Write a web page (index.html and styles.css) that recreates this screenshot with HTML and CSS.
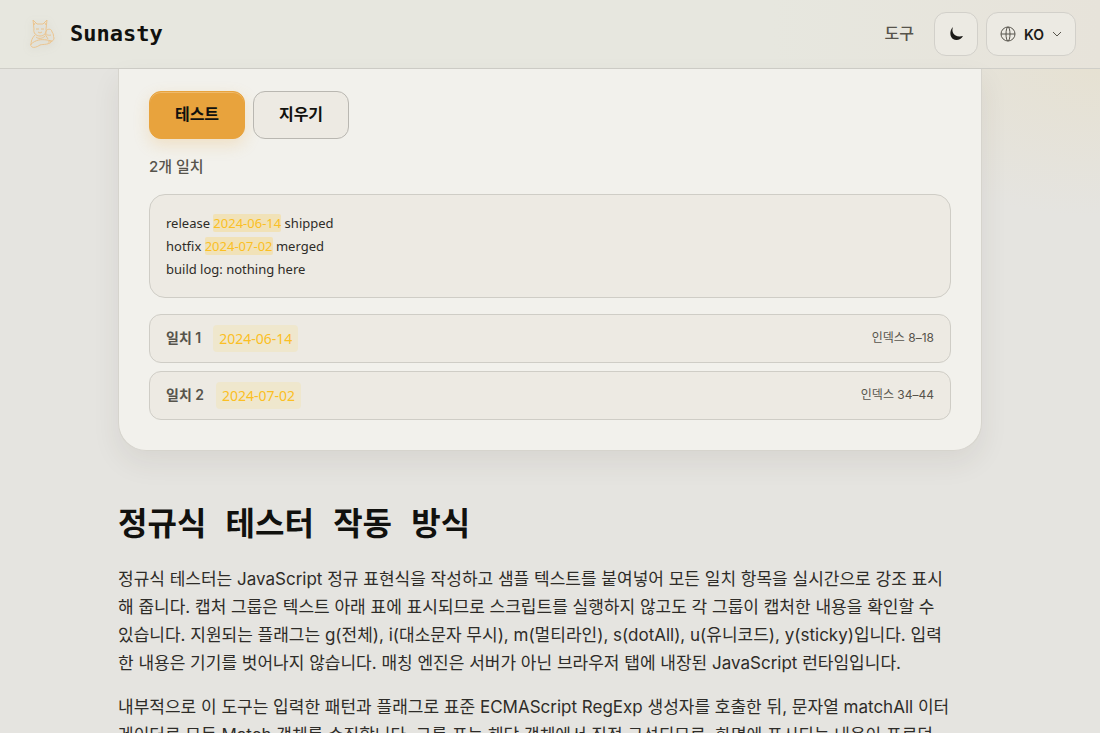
FILE: index.html
```html
<!DOCTYPE html>
<html lang="ko">
<head>
    <meta charset="UTF-8">
    <meta name="viewport" content="width=device-width, initial-scale=1.0">
    <title>정규식 테스터 - Sunasty</title>
    <link rel="stylesheet" href="styles.css">
</head>
<body>
    <header class="header">
        <a class="brand" href="#">
            <svg class="brand-logo" viewBox="0 0 36 36" aria-hidden="true">
                <path d="M9 4l1 9c-1 4 2 7 6 7s7-3 6-7l1-9-4 4h-6z"/>
                <path d="M12 13h3M17 13h3M14 16l2 1 2-1M10 9l1-2M22 9l-1-2"/>
                <path d="M11 19c-3 3-4 6-4 10M21 18l3 5M12 21c2 2 6 2 9-1"/>
                <path d="M22 15c2-3 6-2 6 1 2 2 1 4 2 6 0 3-3 4-6 4M22 15c-1 3 1 5 5 4"/>
                <path d="M7 28c5-4 9-5 16-4l5 1c-2 4-9 3-12 4-3 2-6 3-8 2-1-1-2-2-1-3z"/>
            </svg>
            <span class="brand-name">Sunasty</span>
        </a>
        <nav class="nav">
            <a class="nav-link" href="#">도구</a>
            <button class="icon-btn" type="button" aria-label="테마">
                <svg class="moon" viewBox="0 0 16 16" aria-hidden="true">
                    <path d="M5 1C3 6 6 12 15 10C13 14 8 15 5 13C2 11 1 5 5 1z"/>
                </svg>
            </button>
            <button class="lang-btn" type="button">
                <svg class="globe" viewBox="0 0 16 16" aria-hidden="true">
                    <circle cx="8" cy="8" r="7"/>
                    <ellipse cx="8" cy="8" rx="2" ry="7"/>
                    <path d="M1 8h14"/>
                </svg>
                <span>KO</span>
                <svg class="chevron" viewBox="0 0 10 10" aria-hidden="true"><path d="M1 3l4 4 4-4"/></svg>
            </button>
        </nav>
    </header>

    <main class="container">
        <section class="card">
            <div class="actions">
                <button class="btn btn-primary" type="button">테스트</button>
                <button class="btn btn-secondary" type="button">지우기</button>
            </div>
            <p class="status">2개 일치</p>
            <div class="preview">
                <p>release <mark>2024-06-14</mark> shipped</p>
                <p>hotfix <mark>2024-07-02</mark> merged</p>
                <p>build log: nothing here</p>
            </div>
            <ul class="matches">
                <li class="match">
                    <strong class="match-label">일치 1</strong>
                    <code class="match-value">2024-06-14</code>
                    <span class="match-index">인덱스 8–18</span>
                </li>
                <li class="match">
                    <strong class="match-label">일치 2</strong>
                    <code class="match-value">2024-07-02</code>
                    <span class="match-index">인덱스 34–44</span>
                </li>
            </ul>
        </section>

        <article class="article">
            <h2>정규식 테스터 작동 방식</h2>
            <p>정규식 테스터는 JavaScript 정규 표현식을 작성하고 샘플 텍스트를 붙여넣어 모든 일치 항목을 실시간으로 강조 표시<br>해 줍니다. 캡처 그룹은 텍스트 아래 표에 표시되므로 스크립트를 실행하지 않고도 각 그룹이 캡처한 내용을 확인할 수<br>있습니다. 지원되는 플래그는 g(전체), i(대소문자 무시), m(멀티라인), s(dotAll), u(유니코드), y(sticky)입니다. 입력<br>한 내용은 기기를 벗어나지 않습니다. 매칭 엔진은 서버가 아닌 브라우저 탭에 내장된 JavaScript 런타임입니다.</p>
            <p>내부적으로 이 도구는 입력한 패턴과 플래그로 표준 ECMAScript RegExp 생성자를 호출한 뒤, 문자열 matchAll 이터<br>레이터로 모든 Match 객체를 수집합니다. 그룹 표는 해당 객체에서 직접 구성되므로, 화면에 표시되는 내용이 프로덕</p>
        </article>
    </main>
</body>
</html>
```
FILE: styles.css
```css
* {
    box-sizing: border-box;
}

body {
    margin: 0;
    height: 100vh;
    overflow: hidden;
    font-family: Inter, "Noto Sans CJK KR", sans-serif;
    color: #2e2c28;
    background: radial-gradient(ellipse 260px 150px at 100% 9%, #e6e1d2 0, #e5e4e0 100%);
}

p,
ul,
h2 {
    margin: 0;
    padding: 0;
}

button {
    font-family: inherit;
    cursor: pointer;
}

svg {
    fill: none;
    stroke: currentColor;
}

.header {
    display: flex;
    align-items: center;
    justify-content: space-between;
    height: 69px;
    padding: 0 24px;
    background: linear-gradient(90deg, #e7e7df, #e7e7df 70%, #e7e3da);
    border-bottom: 1px solid #cfcec8;
}

.brand {
    display: flex;
    align-items: center;
    gap: 10px;
    color: #11110e;
    text-decoration: none;
}

.brand-logo {
    width: 36px;
    height: 36px;
    color: #ebc48e;
    filter: drop-shadow(0 2px 4px rgba(120, 110, 90, 0.2));
}

.brand-name {
    font-family: "DejaVu Sans Mono", monospace;
    font-size: 22px;
    line-height: 28px;
    font-weight: 700;
}

.nav {
    display: flex;
    align-items: center;
    gap: 8px;
}

.nav-link {
    margin-right: 12px;
    padding-bottom: 4px;
    font-size: 16px;
    font-weight: 500;
    color: #57544c;
    text-decoration: none;
}

.icon-btn,
.lang-btn {
    display: flex;
    align-items: center;
    justify-content: center;
    height: 44px;
    color: #1c1b18;
    background: #eceae3;
    border: 1px solid #d2d0ca;
    border-radius: 12px;
}

.icon-btn {
    width: 44px;
    padding: 0;
}

.lang-btn {
    gap: 8px;
    width: 90px;
    padding: 0;
    font-size: 14px;
    font-weight: 600;
}

.moon {
    width: 16px;
    height: 16px;
    fill: currentColor;
    stroke: none;
}

.globe {
    width: 16px;
    height: 16px;
    color: #57544c;
}

.chevron {
    width: 10px;
    height: 10px;
    color: #57544c;
}

.container {
    max-width: 912px;
    margin: 0 auto;
    padding: 0 24px;
}

.card {
    padding: 22px 30px 30px;
    background: #f2f1ec;
    border: 1px solid #d6d4cd;
    border-top: 0;
    border-radius: 0 0 28px 28px;
    box-shadow: 0 12px 28px rgba(60, 55, 35, 0.08);
}

.actions {
    display: flex;
    gap: 8px;
}

.btn {
    min-width: 96px;
    height: 48px;
    padding: 0 24px 4px;
    font-size: 16px;
    font-weight: 600;
    color: #11110e;
    border: 1px solid #b9b7b1;
    border-radius: 12px;
}

.btn-primary {
    background: #e8a33d;
    border-color: #e8a33d;
    box-shadow: 0 6px 16px rgba(232, 163, 61, 0.22), inset 0 1px 0 rgba(255, 255, 255, 0.25);
}

.btn-secondary {
    background: #edeae3;
}

.status {
    margin: 16px 0;
    font-size: 15px;
    line-height: 23px;
    font-weight: 500;
    color: #57544c;
}

.preview {
    padding: 17px 16px 16px;
    font-family: "Noto Sans", sans-serif;
    font-size: 13px;
    line-height: 23px;
    background: #edeae3;
    border: 1px solid #cfcdc6;
    border-radius: 16px;
}

.preview mark {
    color: #fbbf24;
    background: #f1e2b8;
    border-radius: 2px;
}

.matches {
    display: flex;
    flex-direction: column;
    gap: 8px;
    margin-top: 16px;
    list-style: none;
}

.match {
    display: flex;
    align-items: center;
    gap: 12px;
    padding: 10px 16px;
    background: #edeae3;
    border: 1px solid #cfcdc6;
    border-radius: 12px;
}

.match-label,
.match-index {
    padding-bottom: 4px;
}

.match-label {
    font-size: 14px;
    font-weight: 600;
    color: #57544c;
}

.match-value {
    padding: 2px 6px;
    font-family: "Noto Sans", sans-serif;
    font-size: 14px;
    line-height: 23px;
    color: #fbbf24;
    background: #efe7cd;
    border-radius: 4px;
}

.match-index {
    margin-left: auto;
    font-size: 12px;
    color: #57544c;
}

.article {
    padding-top: 48px;
}

.article h2 {
    margin-bottom: 16px;
    font-family: "DejaVu Sans Mono", "Noto Sans CJK KR", monospace;
    font-size: 32px;
    line-height: 50px;
    font-weight: 700;
    color: #11110e;
}

.article p {
    margin-bottom: 16px;
    font-size: 17px;
    line-height: 28px;
}
```
